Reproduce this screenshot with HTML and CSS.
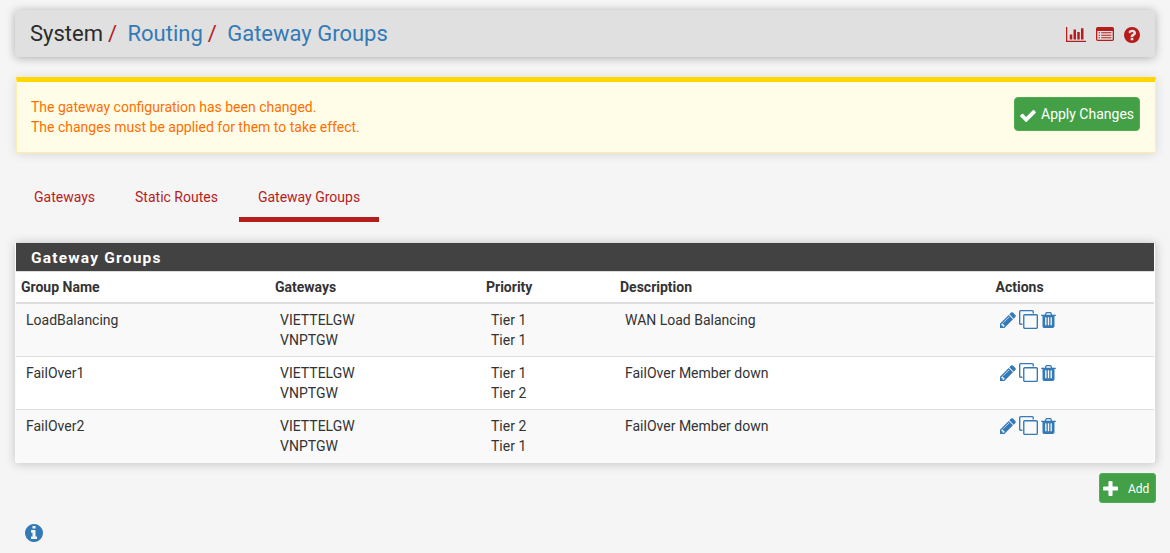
FILE: index.html
```html
<!DOCTYPE html>
<html lang="en">
<head>
<meta charset="utf-8">
<title>System: Routing: Gateway Groups</title>
<link rel="stylesheet" href="styles.css">
</head>
<body>
<svg class="defs" width="0" height="0" aria-hidden="true">
  <symbol id="pencil" viewBox="128 128 1536 1536"><path d="M491 1536l91-91-235-235-91 91v107h128v128h107zm523-928q0-22-22-22-10 0-17 7l-542 542q-7 7-7 17 0 22 22 22 10 0 17-7l542-542q7-7 7-17zm-54-192l416 416-832 832h-416v-416zm683 96q0 53-37 90l-166 166-416-416 166-165q36-38 90-38 53 0 91 38l235 234q37 39 37 91z"/></symbol>
  <symbol id="clone" viewBox="0 0 1792 1792"><path fill-rule="evenodd" d="M1664 1632v-1088q0-13-9.500-22.500t-22.500-9.500h-1088q-13 0-22.500 9.500t-9.500 22.500v1088q0 13 9.500 22.500t22.500 9.500h1088q13 0 22.500-9.500t9.500-22.500zm128-1088v1088q0 66-47 113t-113 47h-1088q-66 0-113-47t-47-113v-1088q0-66 47-113t113-47h1088q66 0 113 47t47 113zm-384-384v160h-128v-160q0-13-9.500-22.500t-22.500-9.500h-1088q-13 0-22.500 9.500t-9.500 22.500v1088q0 13 9.500 22.500t22.500 9.500h160v128h-160q-66 0-113-47t-47-113v-1088q0-66 47-113t113-47h1088q66 0 113 47t47 113z"/></symbol>
  <symbol id="trash" viewBox="192 128 1408 1536"><path d="M704 1376v-704q0-14-9-23t-23-9h-64q-14 0-23 9t-9 23v704q0 14 9 23t23 9h64q14 0 23-9t9-23zm256 0v-704q0-14-9-23t-23-9h-64q-14 0-23 9t-9 23v704q0 14 9 23t23 9h64q14 0 23-9t9-23zm256 0v-704q0-14-9-23t-23-9h-64q-14 0-23 9t-9 23v704q0 14 9 23t23 9h64q14 0 23-9t9-23zm-544-992h448l-48-117q-7-9-17-11h-317q-10 2-17 11zm928 32v64q0 14-9 23t-23 9h-96v948q0 83-47 143.500t-113 60.500h-832q-66 0-113-58.500t-47-141.500v-952h-96q-14 0-23-9t-9-23v-64q0-14 9-23t23-9h309l70-167q15-37 54-63t79-26h320q40 0 79 26t54 63l70 167h309q14 0 23 9t9 23z"/></symbol>
</svg>

<header class="page-header">
  <ol class="breadcrumb">
    <li>System</li>
    <li><a href="#">Routing</a></li>
    <li><a href="#">Gateway Groups</a></li>
  </ol>
  <nav class="context-links">
    <svg class="icon-chart" viewBox="0 128 2048 1536"><path d="M640 896v512h-256v-512h256zm384-512v1024h-256v-1024h256zm1024 1152v128h-2048v-1536h128v1408h1920zm-640-896v768h-256v-768h256zm384-384v1152h-256v-1152h256z"/></svg>
    <svg class="icon-list" viewBox="0 0 18 14"><path fill-rule="evenodd" d="M1.700 0h14.600Q18 0 18 1.700v10.600Q18 14 16.300 14H1.700Q0 14 0 12.300V1.700Q0 0 1.700 0zM1.300 4v8.300q0 .4.4.4h14.600q.4 0 .4-.4V4zM2.600 5.200H4v1.100H2.600zM5.200 5.200h10.200v1.100H5.200zM2.600 7.700H4v1.100H2.600zM5.200 7.700h10.200v1.100H5.200zM2.600 10.200H4v1.100H2.600zM5.200 10.200h10.200v1.100H5.200z"/></svg>
    <svg class="icon-help" viewBox="128 128 1536 1536"><path d="M1024 1376v-192q0-14-9-23t-23-9h-192q-14 0-23 9t-9 23v192q0 14 9 23t23 9h192q14 0 23-9t9-23zm256-672q0-88-55.500-163t-138.500-116-170-41q-243 0-371 213-15 24 8 42l132 100q7 6 19 6 16 0 25-12 53-68 86-92 34-24 86-24 48 0 85.500 26t37.500 59q0 38-20 61t-68 45q-63 28-115.500 86.500t-52.500 125.500v36q0 14 9 23t23 9h192q14 0 23-9t9-23q0-19 21.500-49.500t54.500-49.500q32-18 49-28.500t46-35 44.500-48 28-60.500 12.500-81zm384 192q0 209-103 385.500t-279.500 279.500-385.500 103-385.500-103-279.500-279.500-103-385.500 103-385.500 279.500-279.500 385.500-103 385.500 103 279.500 279.500 103 385.500z"/></svg>
  </nav>
</header>

<section class="alert">
  <p>The gateway configuration has been changed.<br>The changes must be applied for them to take effect.</p>
  <button class="btn btn-apply"><svg class="icon-check" viewBox="121 334 1550 1188"><path d="M1671 566q0 40-28 68l-724 724-136 136q-28 28-68 28t-68-28l-136-136-362-362q-28-28-28-68t28-68l136-136q28-28 68-28t68 28l294 295 656-657q28-28 68-28t68 28l136 136q28 28 28 68z"/></svg><span>Apply Changes</span></button>
</section>

<nav class="tabs">
  <a href="#">Gateways</a>
  <a href="#">Static Routes</a>
  <a href="#" class="active">Gateway Groups</a>
</nav>

<section class="panel">
  <h2>Gateway Groups</h2>
  <table>
    <colgroup><col class="c-name"><col class="c-gw"><col class="c-prio"><col class="c-desc"><col></colgroup>
    <thead>
      <tr><th>Group Name</th><th>Gateways</th><th>Priority</th><th>Description</th><th>Actions</th></tr>
    </thead>
    <tbody>
      <tr><td>LoadBalancing</td><td>VIETTELGW<br>VNPTGW</td><td>Tier 1<br>Tier 1</td><td>WAN Load Balancing</td>
        <td><div class="actions"><svg class="icon-pencil"><use href="#pencil"/></svg><svg class="icon-clone"><use href="#clone"/></svg><svg class="icon-trash"><use href="#trash"/></svg></div></td></tr>
      <tr><td>FailOver1</td><td>VIETTELGW<br>VNPTGW</td><td>Tier 1<br>Tier 2</td><td>FailOver Member down</td>
        <td><div class="actions"><svg class="icon-pencil"><use href="#pencil"/></svg><svg class="icon-clone"><use href="#clone"/></svg><svg class="icon-trash"><use href="#trash"/></svg></div></td></tr>
      <tr><td>FailOver2</td><td>VIETTELGW<br>VNPTGW</td><td>Tier 2<br>Tier 1</td><td>FailOver Member down</td>
        <td><div class="actions"><svg class="icon-pencil"><use href="#pencil"/></svg><svg class="icon-clone"><use href="#clone"/></svg><svg class="icon-trash"><use href="#trash"/></svg></div></td></tr>
    </tbody>
  </table>
</section>

<div class="action-buttons">
  <button class="btn btn-add"><svg class="icon-plus" viewBox="192 128 1408 1408"><path d="M1600 736v192q0 40-28 68t-68 28h-416v416q0 40-28 68t-68 28h-192q-40 0-68-28t-28-68v-416h-416q-40 0-68-28t-28-68v-192q0-40 28-68t68-28h416v-416q0-40 28-68t68-28h192q40 0 68 28t28 68v416h416q40 0 68 28t28 68z"/></svg><span>Add</span></button>
</div>

<div class="info">
  <svg class="icon-info" viewBox="128 128 1536 1536"><path d="M1152 1376v-160q0-14-9-23t-23-9h-96v-512q0-14-9-23t-23-9h-320q-14 0-23 9t-9 23v160q0 14 9 23t23 9h96v320h-96q-14 0-23 9t-9 23v160q0 14 9 23t23 9h448q14 0 23-9t9-23zm-128-896v-160q0-14-9-23t-23-9h-192q-14 0-23 9t-9 23v160q0 14 9 23t23 9h192q14 0 23-9t9-23zm640 416q0 209-103 385.500t-279.500 279.500-385.500 103-385.500-103-279.500-279.500-103-385.500 103-385.500 279.500-279.500 385.500-103 385.500 103 279.500 279.500 103 385.500z"/></svg>
</div>
</body>
</html>
```

FILE: styles.css
```css
* {
  box-sizing: border-box;
}

body {
  margin: 0;
  padding: 10px 14px 0 15px;
  background: #f5f5f5;
  color: #333;
  font: 14px/20px Roboto, "Liberation Sans", sans-serif;
  overflow: hidden;
}

a {
  color: #337ab7;
  text-decoration: none;
}

svg {
  display: block;
  flex: none;
  fill: currentColor;
}

.defs {
  position: absolute;
}

.page-header {
  display: flex;
  justify-content: space-between;
  height: 47px;
  margin-right: 1px;
  padding: 0 15px;
  border-radius: 4px;
  background: #e0e0e0;
  box-shadow: 0 1px 10px rgba(0, 0, 0, 0.3);
}

.breadcrumb {
  display: flex;
  margin: 0;
  padding: 0;
  list-style: none;
  font-size: 22px;
  line-height: 47px;
  color: #2b2b2b;
}

.breadcrumb li + li::before {
  content: "/";
  padding: 0 10.4px 0 5px;
  color: #b71c1c;
}

.context-links {
  display: flex;
  align-items: center;
  padding-top: 2px;
  color: #b71c1c;
}

.icon-chart {
  width: 20px;
  height: 15px;
  margin: 0 10px 1px 0;
}

.icon-list {
  width: 18px;
  height: 14px;
  margin: 0 10px 1px 0;
}

.icon-help {
  width: 16px;
  height: 16px;
}

.alert {
  display: flex;
  justify-content: space-between;
  height: 76px;
  margin: 20px 0 0 1px;
  padding: 15px 15px 0 14px;
  border: 1px solid #ffecb3;
  border-top: 5px solid #ffd600;
  background: #fffde7;
  color: #ff6f00;
  box-shadow: 0 1px 10px rgba(0, 0, 0, 0.12);
}

.alert p {
  margin: 0;
}

.btn {
  display: flex;
  align-items: center;
  border: 1px solid #4caf50;
  border-radius: 4px;
  background: #43a047;
  color: #fff;
  font-family: inherit;
  white-space: nowrap;
}

.btn-apply {
  width: 126px;
  height: 34px;
  padding: 0 5px;
  font-size: 14px;
}

.icon-check {
  width: 16px;
  height: 12px;
  margin: 3px 5px 0 0;
}

.tabs {
  display: flex;
  height: 46px;
  margin: 23px 0 20px;
}

.tabs a {
  padding: 11px 20px 0;
  color: #b71c1c;
}

.tabs a:first-child {
  padding-left: 19px;
}

.tabs .active {
  margin-left: 1px;
  padding: 11px 19px 0;
  border-bottom: 5px solid #b71c1c;
}

.panel {
  height: 221px;
  border: 1px solid #ddd;
  border-left-color: #fafafa;
  background: #fff;
  box-shadow: 0 1px 10px rgba(0, 0, 0, 0.2);
}

.panel h2 {
  height: 29px;
  margin: 0 1px 0 0;
  padding-left: 15px;
  border-bottom: 1px solid #ddd;
  background: #424242;
  background-clip: padding-box;
  color: #fff;
  font-size: 15.500px;
  font-weight: 700;
  line-height: 30px;
  letter-spacing: 1.200px;
}

table {
  width: calc(100% - 1px);
  table-layout: fixed;
  border-collapse: separate;
  border-spacing: 0;
}

th,
td {
  padding: 0 5px;
  text-align: left;
  vertical-align: top;
}

th {
  height: 32px;
  padding-top: 5px;
  border-bottom: 2px solid #ddd;
  font-weight: 700;
}

td {
  height: 53px;
  padding: 6px 10px 0;
  border-bottom: 1px solid #ddd;
}

tr:last-child td {
  border-bottom: 0;
}

tbody tr:nth-child(odd) {
  background: #f9f9f9;
}

.c-name {
  width: 254px;
}

.c-gw {
  width: 211px;
}

.c-prio {
  width: 134px;
}

.c-desc {
  width: 375.500px;
}

.actions {
  display: flex;
  align-items: center;
  height: 19px;
  margin-left: -0.500px;
  color: #337ab7;
}

.icon-pencil {
  width: 16px;
  height: 16px;
}

.icon-clone {
  width: 19px;
  height: 19px;
  margin: 0 3px 0 3px;
}

.icon-trash {
  width: 15px;
  height: 16px;
}

.action-buttons {
  display: flex;
  justify-content: flex-end;
  margin-top: 10px;
}

.btn-add {
  width: 57px;
  height: 30px;
  padding: 0 4px 0 3px;
  border-radius: 3px;
  font-size: 12px;
}

.btn-add span {
  padding-top: 2px;
}

.icon-plus {
  width: 15px;
  height: 15px;
  margin-right: 10px;
}

.info {
  margin-top: 21px;
  padding-left: 10px;
  color: #337ab7;
}

.icon-info {
  width: 18px;
  height: 18px;
}
```
